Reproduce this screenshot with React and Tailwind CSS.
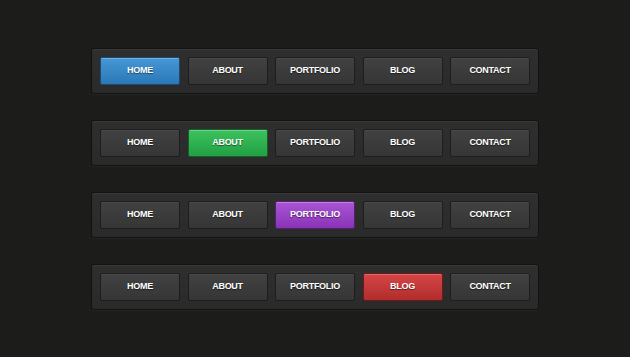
const items = ['HOME', 'ABOUT', 'PORTFOLIO', 'BLOG', 'CONTACT'];

const activeStyles = {
  blue: 'bg-gradient-to-b from-[#4597d6] to-[#2c78b6] border-[#1c4a70] shadow-[inset_0_1px_0_rgba(255,255,255,0.25)]',
  green: 'bg-gradient-to-b from-[#3cc25f] to-[#22a043] border-[#15602a] shadow-[inset_0_1px_0_rgba(255,255,255,0.25)]',
  purple: 'bg-gradient-to-b from-[#a955d6] to-[#8a32b6] border-[#53206e] shadow-[inset_0_1px_0_rgba(255,255,255,0.25)]',
  red: 'bg-gradient-to-b from-[#d64646] to-[#b12c2c] border-[#6a1a1a] shadow-[inset_0_1px_0_rgba(255,255,255,0.2)]',
};

const bars = [
  { active: 0, color: 'blue' },
  { active: 1, color: 'green' },
  { active: 2, color: 'purple' },
  { active: 3, color: 'red' },
];

const NavBar = ({ active, color }) => (
  <div className="w-[448px] h-[46px] rounded-[3px] border border-[#121212] bg-gradient-to-b from-[#2f2f2f] to-[#2a2a2a] shadow-[inset_0_1px_0_#3a3a3a,0_1px_0_rgba(255,255,255,0.04)] flex items-center pl-[8px] gap-[7.5px]">
    {items.map((label, i) => (
      <div
        key={label}
        className={`w-[80px] h-[28px] rounded-[2px] border flex items-center justify-center text-white font-bold text-[9px] tracking-[-0.3px] [text-shadow:0_1px_1px_rgba(0,0,0,0.5)] ${
          i === active
            ? activeStyles[color]
            : 'bg-gradient-to-b from-[#414141] to-[#363636] border-[#1d1d1d] shadow-[inset_0_1px_0_#4b4b4b]'
        }`}
      >
        {label}
      </div>
    ))}
  </div>
);

export default function App() {
  return (
    <div className="w-[630px] h-[357px] bg-[#1c1c1a] font-['Liberation_Sans',Arial,sans-serif] flex flex-col items-start pl-[91px] pt-[48px] gap-[26px] overflow-hidden">
      {bars.map((b) => (
        <NavBar key={b.color} active={b.active} color={b.color} />
      ))}
    </div>
  );
}
